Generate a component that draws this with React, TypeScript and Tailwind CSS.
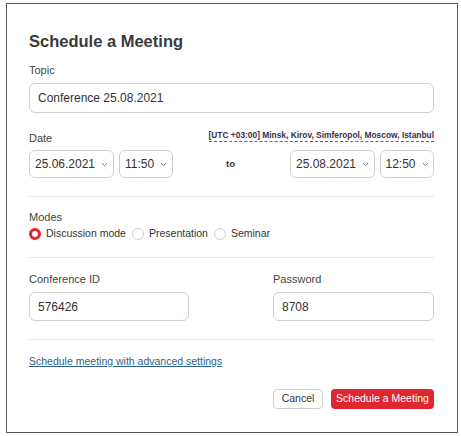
import React from "react";

const Chevron = () => (
    <svg width="7" height="5" viewBox="0 0 7 5" className="ml-1.5 mt-[1px]">
        <path d="M1 1.2 L3.5 3.6 L6 1.2" fill="none" stroke="#777" strokeWidth="1" />
    </svg>
);

const Select = ({ value, w }: { value: string; w: string }) => (
    <div className={`${w} h-[28px] flex items-center justify-center rounded-[6px] border border-[#d0d0d0] text-[12px] text-[#333]`}>
        {value}
        <Chevron />
    </div>
);

const Radio = ({ checked, label }: { checked?: boolean; label: string }) => (
    <label className="flex items-center gap-[5px] mr-[6px]">
        {checked ? (
            <span className="w-[12px] h-[12px] rounded-full border-[3px] border-[#e0262f] bg-white" />
        ) : (
            <span className="w-[12px] h-[12px] rounded-full border border-[#cfcfcf] bg-white" />
        )}
        <span className="text-[10.5px] text-[#333]">{label}</span>
    </label>
);

export default function App() {
    return (
        <div className="w-[461px] h-[436px] bg-white pt-[3px] pl-[6px]" style={{ fontFamily: '"Liberation Sans", Arial, sans-serif' }}>
            <div className="w-[452px] h-[430px] border border-[#555] bg-white px-[22px] pt-[27px] flex flex-col">
                {/* Title */}
                <h1 className="text-[16.5px] leading-[20px] font-bold text-[#3a3a3a]">Schedule a Meeting</h1>

                {/* Topic */}
                <div className="mt-[12px] text-[11px] leading-[14px] text-[#444]">Topic</div>
                <div className="mt-[6px] h-[30px] w-[405px] rounded-[6px] border border-[#d0d0d0] flex items-center pl-[8px] text-[12px] text-[#333]">
                    Conference 25.08.2021
                </div>

                {/* Date */}
                <div className="mt-[13px] w-[405px] flex justify-between items-end h-[16px]">
                    <span className="text-[11px] leading-[14px] text-[#444] mb-[-3px]">Date</span>
                    <span className="text-[8.4px] leading-[12px] font-bold text-[#3b3050] border-b border-dashed border-[#666]">
                        [UTC +03:00] Minsk, Kirov, Simferopol, Moscow, Istanbul
                    </span>
                </div>
                <div className="mt-[8px] w-[405px] flex items-center">
                    <Select value="25.06.2021" w="w-[85px]" />
                    <div className="ml-[5px]">
                        <Select value="11:50" w="w-[54px]" />
                    </div>
                    <span className="ml-[53px] text-[9.5px] font-bold text-[#333]">to</span>
                    <div className="ml-auto flex gap-[5px]">
                        <Select value="25.08.2021" w="w-[85px]" />
                        <Select value="12:50" w="w-[54px]" />
                    </div>
                </div>

                <div className="mt-[18px] w-[405px] border-t border-[#e6e6e6]" />

                {/* Modes */}
                <div className="mt-[13px] text-[11px] leading-[14px] text-[#444]">Modes</div>
                <div className="mt-[3px] flex items-center h-[14px]">
                    <Radio checked label="Discussion mode" />
                    <Radio label="Presentation" />
                    <Radio label="Seminar" />
                </div>

                <div className="mt-[16px] w-[405px] border-t border-[#e6e6e6]" />

                {/* Conference ID / Password */}
                <div className="mt-[14px] w-[405px] flex">
                    <div className="w-[244px]">
                        <div className="text-[11px] leading-[14px] text-[#444]">Conference ID</div>
                        <div className="mt-[6px] h-[29px] w-[160px] rounded-[6px] border border-[#d0d0d0] flex items-center pl-[8px] text-[12px] text-[#333]">
                            576426
                        </div>
                    </div>
                    <div className="flex-1">
                        <div className="text-[11px] leading-[14px] text-[#444]">Password</div>
                        <div className="mt-[6px] h-[29px] rounded-[6px] border border-[#d0d0d0] flex items-center pl-[8px] text-[12px] text-[#333]">
                            8708
                        </div>
                    </div>
                </div>

                <div className="mt-[18px] w-[405px] border-t border-[#e6e6e6]" />

                {/* Advanced link */}
                <a className="mt-[14px] text-[10.5px] leading-[14px] text-[#2b5f8c] underline self-start">
                    Schedule meeting with advanced settings
                </a>

                {/* Buttons */}
                <div className="mt-[21px] w-[405px] flex justify-end gap-[8px]">
                    <button className="h-[20px] w-[50px] rounded-[4px] border border-[#cfcfcf] bg-white text-[10.5px] text-[#333]">
                        Cancel
                    </button>
                    <button className="h-[20px] w-[103px] rounded-[4px] bg-[#e0262f] text-[10.5px] text-white">
                        Schedule a Meeting
                    </button>
                </div>
            </div>
        </div>
    );
}
